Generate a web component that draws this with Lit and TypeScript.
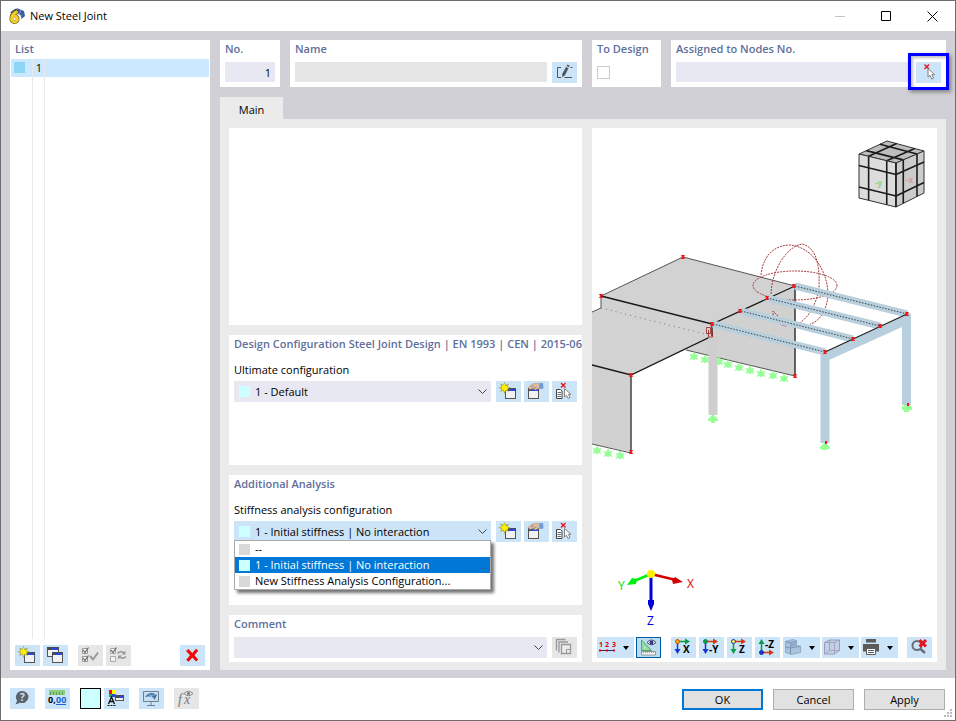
import { LitElement, html, svg, css, nothing, TemplateResult, SVGTemplateResult } from "lit";
import { customElement, state } from "lit/decorators.js";

/* ---------- icons, drawn on a 25 x 21 grid (one tool button) ---------- */

const windowShape = (x: number, y: number, w: number, h: number) => svg`
  <rect x=${x + 0.5} y=${y + 0.5} width=${w} height=${h} fill="#f1f1f1" stroke="#555"/>
  <rect x=${x} y=${y} width=${w + 1} height="3" fill="#4a4a55"/>
  <rect x=${x + 4} y=${y + 1} width=${w - 4} height="2" fill="#2b48e0"/>`;

const star = svg`
  <path d="M8.500 1l1.300 3.100 3.200-1.600-1.400 3.100 3.300 1.100-3.300 1.200 1.200 3.200-3-1.500-1.300 3.300-1.200-3.300-3.200 1.400 1.500-3.100-3.300-1.200 3.300-1.200-1.400-3.100 3.100 1.500z" fill="#9a9a4c"/>
  <path d="M8.500 2l1.200 3.200 2.300-.9-.9 2 2.300.500-2.300.9.800 2.100-2.200-1-1 2.600-1-2.600-2.200.9 1-2.100-2.700-.9 2.700-.9-1-2.100 2.100.9z" fill="#fff200"/>`;

const cursor = svg`
  <path d="M12.500 7.500v8.500l2-1.800 1.600 3.300 1.900-.9-1.600-3.200h2.600z" fill="#fff" stroke="#777" stroke-width=".9"/>`;

const redCross = (x: number, y: number, s: number, w = 1.4) => svg`
  <path d="M${x} ${y}l${s} ${s}m0 ${-s}l${-s} ${s}" stroke="#e8141c" stroke-width=${w} fill="none"/>`;

const axisArrow = (
  x1: number, y1: number, x2: number, y2: number, color: string,
) => {
  const dx = Math.sign(x2 - x1);
  const dy = Math.sign(y2 - y1);
  const head = dx
    ? `${x2 + 3},${y2} ${x2 - 2},${y2 - 3} ${x2 - 2},${y2 + 3}`
    : `${x2},${y2 + 3 * dy} ${x2 - 3},${y2 - 2 * dy} ${x2 + 3},${y2 - 2 * dy}`;
  return svg`<path d="M${x1} ${y1}L${x2} ${y2}" stroke=${color} stroke-width="1.500"/>
    <polygon points=${head} fill=${color}/>`;
};

const axisIcon = (
  label: string, right: string, vert: string, dot: string, ring: string, up = false,
) => {
  const oy = up ? 15.5 : 4.5;
  return svg`
    ${axisArrow(6.5, oy, 16, oy, right)}
    ${axisArrow(6.5, oy, 6.5, up ? 5 : 14, vert)}
    <circle cx="6.500" cy=${oy} r="2" fill=${dot} stroke=${ring}/>
    <text x=${label.length > 1 ? 10 : 12} y=${up ? 11 : 16} class="glyph">${label}</text>`;
};

const icons: Record<string, SVGTemplateResult> = {
  create: svg`${windowShape(9, 7, 10, 10)}${star}`,
  copy: svg`${windowShape(4, 2, 11, 9)}${windowShape(9, 7, 10, 10)}`,
  edit: svg`${windowShape(4, 7, 10, 10)}
    <path d="M4 6.500l4-3.500 6-.8 4 .8v4l-4 .8-3 1.200-2-1.500-3 1z" fill="#dcbca4" stroke="#a98d78" stroke-width=".5"/>
    <path d="M7 6l3-1.500M9.500 7.500l3-1.500" stroke="#8d6f5c" stroke-width=".7"/>
    <path d="M15 2.500l4-.5.500 5.500-4 .5z" fill="#6f9bd6"/>`,
  pickList: svg`${redCross(9, 2, 4.5)}${cursor}
    <path d="M4.500 8.500h4l1.500 1.500v7.500h-5.500z" fill="#fff" stroke="#444"/>
    <path d="M5.500 11.500h3.500M5.500 13.500h3.500M5.500 15.500h3.500" stroke="#444" stroke-width=".8"/>`,
  pickNode: svg`${redCross(8.5, 2.5, 4.5)}
    <path d="M12 6.500v8.500l2-1.800 1.700 3.800 1.900-.9-1.700-3.500h2.600z" fill="#fff" stroke="#777" stroke-width=".9"/>`,
  rename: svg`
    <path d="M9 5.500h-3.500v10h3.500M12.500 15.500h7.500M18.500 5.500h2" fill="none" stroke="#555"/>
    <path d="M14 5l2.500 1.300-3.500 7-3 2 .3-3.500z" fill="#555"/>
    <path d="M14.500 4l1-1.500 2.200 1.200-.8 1.500z" fill="#555"/>`,
  checkAll: svg`
    <path d="M4.500 3.500h5v5h-5zM4.500 11.500h5v5h-5z" fill="#f5f5f5" stroke="#999"/>
    <path d="M5 5l2 2.500 3.500-5M5 13l2 2.500 3.500-5" fill="none" stroke="#666" stroke-width="1.200"/>
    <path d="M12 11l3 3.500 5-7" fill="none" stroke="#999" stroke-width="2"/>`,
  toggle: svg`
    <path d="M4.500 3.500h5v5h-5zM4.500 11.500h5v5h-5z" fill="#f2f2f2" stroke="#aaa"/>
    <path d="M5 5l2 2.500 3.500-5" fill="none" stroke="#666" stroke-width="1.200"/>
    <path d="M11.500 8.500q3-3.500 6.500-.5M20 11.500q-3 3-6.500.5" fill="none" stroke="#999" stroke-width="1.500"/>
    <path d="M19.500 5.500v4h-4zM12 14.500v-4h4z" fill="#999"/>`,
  remove: svg`
    <path d="M6 6l2.500-2 3.800 4 3.700-4.200 2.300 2-3.800 4.500 3.700 4.200-2.200 2-3.700-4-3.600 4.200-2.500-2 3.800-4.500z" fill="#f00a0a"/>`,
  help: svg`
    <path d="M12.500 3a6.300 6 0 1 1-2.300 11.700L5.500 16.500l1.600-4A6.300 6 0 0 1 12.500 3z" fill="#5c6470"/>
    <text x="10" y="13" class="glyph" fill="#d5e6f5">?</text>`,
  units: svg`
    <path d="M4 2h16v5h-16z" fill="#8fce7e"/>
    <path d="M5.500 4v3M8.500 4v3M11.500 4v3M14.500 4v3M17.500 4v3" stroke="#4e9a45" stroke-width=".8"/>
    <text x="3" y="15" class="digits">0,</text><text x="11" y="15" class="digits" fill="#1a62d8">00</text>
    <path d="M11 16.500h10" stroke="#1a62d8"/>`,
  palette: svg`
    <path d="M5 2h3v4h-3z" fill="#e11"/><path d="M8 2h3.500v4h-3.500z" fill="#ff0"/>
    <path d="M5 6h3v3h-3z" fill="#18b14b"/><path d="M8 6h3.500v3h-3.500z" fill="#2b48e0"/>
    <path d="M4.500 16l3-7 3 7M5.500 13.500h4" fill="none" stroke="#111" stroke-width="1.300"/>
    <path d="M3.500 17.500h2M6.500 17.500h2M9.500 17.500h2" stroke="#111"/>
    ${windowShape(11, 7, 8, 5)}`,
  display: svg`
    <path d="M4.500 3.500h15v10h-15z" fill="#c6e0f2" stroke="#6d7f92"/>
    <path d="M6 9q5-7 12-2l-2.500 5q-1-4-4-3.500-3 0-5.500.5z" fill="#3f6fa8"/>
    <path d="M8 8.500l9-2M10.500 6l4 5" stroke="#a9c6e2" stroke-width=".7"/>
    <path d="M12 13.500v3.500M8 17.500h8" stroke="#6d7f92"/>`,
  formula: svg`
    <text x="4" y="16" class="serif">f</text><text x="10" y="16" class="serif">x</text>
    <path d="M10 5.500q4.500-4.500 9 0-4.500 4.500-9 0z" fill="#e8e8e8" stroke="#888"/>
    <circle cx="14.500" cy="5.500" r="1.500" fill="#777"/>`,
  library: svg`
    <path d="M4.500 13.500v-11h9M7 15.500v-10.500h9" fill="none" stroke="#999" stroke-width="1.300"/>
    <path d="M9.500 7.500h9v9h-9z" fill="#ebebeb" stroke="#999" stroke-width="1.300"/>
    <path d="M14.500 16.500v-4h4" fill="none" stroke="#999"/>`,
  numbering: svg`
    <text x="2" y="10" class="tiny">1</text><text x="8" y="10" class="tiny">2</text><text x="15" y="10" class="tiny">3</text>
    <path d="M3 13.500h14" stroke="#2a2a70"/>
    <path d="M2 12.500h2v2h-2zM9 12.500h2v2h-2zM16 12.500h2v2h-2z" fill="#e00"/>`,
  measure: svg`
    <path d="M5.500 3v10.500h10z" fill="#8fdc9c" stroke="#55a868"/>
    <path d="M8 9v2.500h2.500z" fill="#cce4f7"/>
    <path d="M5.500 14.500h14v3.500h-14z" fill="#f4f4f4" stroke="#888" stroke-width=".8"/>
    <path d="M7.500 14v2M9.500 14v2M11.500 14v2M13.500 14v2M15.500 14v2M17.500 14v2" stroke="#888" stroke-width=".7"/>
    <path d="M11 5.500q4.500-5 9 0-4.500 4.500-9 0z" fill="#fff" stroke="#3a3f78"/>
    <circle cx="15.500" cy="5.500" r="2" fill="#3a3f78"/>`,
  viewX: axisIcon("X", "#0a9a48", "#1436d0", "#ffb000", "#d04a00"),
  viewMinusY: axisIcon("-Y", "#d03a10", "#1436d0", "#0aa050", "#0a8a46"),
  viewZ: axisIcon("Z", "#d03a10", "#0a9a48", "#ffee33", "#223b9c"),
  viewMinusZ: axisIcon("-Z", "#d03a10", "#0a9a48", "#1436d0", "#1436b0", true),
  blocks: svg`
    <path d="M2.500 4.500l7-2 4 1v5l4 1v6l-9 2-6-2z" fill="#a9c2dd" stroke="#8299b5" stroke-width=".7"/>
    <path d="M2.500 4.500l5 1.200v11.800M7.500 5.700l6-1.700M7.500 11l10-1.800M7.500 11l-5-1" fill="none" stroke="#7489a6" stroke-width=".8"/>
    <path d="M7.500 5.700l6-1.700v4.500l-6 1.800z" fill="#8facce"/>`,
  wireCube: svg`
    <path d="M2.500 5.500l5-2.500h10v10.500l-5 3.500h-10z" fill="#c3cfe4" stroke="#9a9cba"/>
    <path d="M2.500 5.500h10v11.500M12.500 5.500l5-2.500M7.500 3v10.500h10M7.500 13.500l-5 3.500" fill="none" stroke="#9a9cba" stroke-width=".8"/>`,
  printer: svg`
    <path d="M5 2h10v3.500h-10zM2 7h16v7.500h-16z" fill="#5b5b5b"/>
    <path d="M5.500 11.500h9v6h-9z" fill="#fff" stroke="#5b5b5b"/>
    <path d="M7 13.500h6M7 15.500h6" stroke="#5b5b5b"/>`,
  resetZoom: svg`
    <circle cx="10" cy="8.500" r="4.500" fill="none" stroke="#6b6f78" stroke-width="2"/>
    <path d="M13.500 12l4.500 4" stroke="#6b6f78" stroke-width="2.500"/>
    ${redCross(12.5, 3, 6.5, 3)}`,
};

const icon = (name: string) =>
  html`<svg class="icon" viewBox="0 0 25 21" aria-hidden="true">${icons[name]}</svg>`;

/* ---------- model preview ---------- */

type Point = [number, number];

const nodes: Point[] = [
  [601, 296], [683, 257], [794, 286], [767, 298], [740, 311], [712, 324],
  [631, 375], [631, 452], [795, 376], [825, 352], [853, 339], [880, 326], [907, 314],
];
const lineSupports: Point[] = [
  [694, 356], [705, 359], [719, 361], [728, 364], [739, 367], [750, 370],
  [761, 373], [773, 375], [784, 378], [597, 450], [608, 453], [620, 455],
];
const beams: [Point, Point][] = [
  [[795, 286], [907, 314]],
  [[767, 298], [880, 326]],
  [[741, 311], [853, 339]],
  [[713, 324], [825, 352]],
];

const lerp = (a: Point, b: Point, t: number): Point => [
  a[0] + (b[0] - a[0]) * t,
  a[1] + (b[1] - a[1]) * t,
];

/* One cube face with its inner grid lines at a quarter and three quarters. */
const cubeFace = (a: Point, b: Point, c: Point, d: Point, fill: string) => {
  const lines = [0.26, 0.75].map((t) => {
    const [p, q] = [lerp(a, b, t), lerp(d, c, t)];
    const [r, s] = [lerp(a, d, t), lerp(b, c, t)];
    return `M${p}L${q}M${r}L${s}`;
  });
  return svg`
    <polygon points=${[a, b, c, d].join(" ")} fill=${fill} stroke="#333"/>
    <path d=${lines.join("")} stroke="#1c1c1c" stroke-width="1.600"/>`;
};

const cube = svg`
  ${cubeFace([859, 154], [887, 141], [924, 151], [896, 163], "#bdbdbd")}
  ${cubeFace([859, 154], [896, 163], [896, 207], [859, 198], "#dcdcdc")}
  ${cubeFace([896, 163], [924, 151], [924, 193], [896, 207], "#cccccc")}
  <path d="M896 163V207" stroke="#1c1c1c" stroke-width="1.600"/>
  <text x="875" y="186" class="cubeText" fill="#7ed88a">-y</text>
  <text x="906" y="183" class="cubeText" fill="#d99a9a">-x</text>`;

const scene = svg`
  <g stroke-linecap="butt">
    <polygon points="795,286 795,376 686,350 712,336 712,324" fill="#d1d1d1"/>
    <path d="M686 350L795 376" stroke="#555"/>
    <path d="M795 286V376" stroke="#333" stroke-width="1.500"/>
    <g fill="#98ff98">${lineSupports.map(([x, y]) => svg`
      <path d=${`M${x} ${y - 5}l1.500 3.500 3-.5-1.500 3 1.500 3-3-1-1.500 1.500-1.500-1.500-3 1 1.500-3-1.500-3 3 .5z`}/>`)}
      <path d="M713 414l5 5v2h-3v2h-4v-2h-3v-2zM825 442l5 5v2h-3v1h-5v-1h-2v-2zM907 403l5 4v3h-3v2h-5v-2h-2v-3z"/>
    </g>
    <polygon points="592,312 601,308 601,296 683,257 795,286 712,324 712,336 631,375 592,365" fill="#d2d2d2"/>
    <polygon points="592,365 631,375 631,452 592,444" fill="#d1d1d1"/>
    <path d="M601 296L683 257L795 286M592 312L601 308V296M592 444L631 453" fill="none" stroke="#555"/>
    <path d="M601 296L712 324L795 286M712 324V336L631 375L592 365" fill="none" stroke="#181818" stroke-width="1.300"/>
    <path d="M631 375V453" stroke="#444" stroke-width="1.500"/>
    <path d="M601 308L709 335" stroke="#777" stroke-dasharray="1 4"/>
    <path d="M713 336V415" stroke="#cecece" stroke-width="9"/>
    <path d="M706.500 327.500h4v6h-4zM708.500 330v7h4v-5" fill="none" stroke="#a02020" stroke-width=".8"/>
    <g fill="none" stroke="#a33a3a" stroke-width="1" stroke-dasharray="2 1">
      <ellipse cx="795" cy="285.500" rx="42" ry="14.500"/>
      <path d="M761 275C763 255 775 245 790 245C812 247 827 270 828 293C828 308 820 322 810 324"/>
      <path d="M771 294C772 268 788 246 802 244C815 247 820 262 819 287C817 305 806 322 795 325"/>
      <path d="M778 316L773 311C772 318 780 326 787 326"/>
    </g>
    <g stroke="#b8cfdd">
      <path d="M825 352V443M906.500 314V405" stroke-width="9"/>
      ${beams.map(([a, b]) => svg`<path d=${`M${a}L${b}`} stroke-width="7"/>`)}
    </g>
    <polygon points="825,352 907,314 911,313 911,323 829,360" fill="#b8cfdd"/>
    ${beams.map(([a, b]) => svg`
      <path d=${`M${a}L${b}`} stroke="#333" stroke-width=".9" stroke-dasharray="1.500 1.500"/>`)}
    <path d="M825 352L907 314" stroke="#222" stroke-width="1.200"/>
    <g fill="#f01818">${nodes.map(([x, y]) => svg`
      <path d=${`M${x - 2} ${y - 2}h4l-1 2 1 2h-4l1-2z`}/>`)}
      <path d="M825 441h2v3h-2zM907 403h2v3h-2z"/>
    </g>
  </g>
  <g>
    <path d="M651 574L676 580" stroke="#d40000" stroke-width="2.500"/>
    <polygon points="683,582 673,584 672,580 675,577" fill="#d40000"/>
    <path d="M651 574L634 581" stroke="#00f010" stroke-width="2.500"/>
    <polygon points="627,585 632,578 637,579 636,584" fill="#00f010"/>
    <path d="M651 574V603" stroke="#0000d8" stroke-width="3"/>
    <polygon points="648,600 654,600 654,604 651,611 648,604" fill="#0000d8"/>
    <circle cx="651" cy="574" r="4" fill="#fff000"/>
    <text x="687" y="588" class="axis" fill="#e00000">X</text>
    <text x="618" y="590" class="axis" fill="#00e010">Y</text>
    <text x="647" y="625" class="axis" fill="#0000e0">Z</text>
  </g>`;

const chevron = html`<svg class="chevron" viewBox="0 0 9 5" aria-hidden="true">
  <path d="M.5.500l4 4 4-4" fill="none" stroke="#444"/></svg>`;

interface Tool {
  icon: string;
  label: string;
  kind?: string;
  disabled?: boolean;
}

const listTools: Tool[] = [
  { icon: "create", label: "New" },
  { icon: "copy", label: "Copy" },
  { icon: "checkAll", label: "Select all", kind: "spaced", disabled: true },
  { icon: "toggle", label: "Invert selection", disabled: true },
  { icon: "remove", label: "Delete", kind: "last" },
];
const viewTools: Tool[] = [
  { icon: "numbering", label: "Numbering", kind: "menu" },
  { icon: "measure", label: "Show dimensions", kind: "pressed" },
  { icon: "viewX", label: "View in X", kind: "spaced" },
  { icon: "viewMinusY", label: "View in -Y" },
  { icon: "viewZ", label: "View in Z" },
  { icon: "viewMinusZ", label: "View in -Z" },
  { icon: "blocks", label: "Rendering", kind: "menu" },
  { icon: "wireCube", label: "Box view", kind: "menu" },
  { icon: "printer", label: "Print", kind: "menu" },
  { icon: "resetZoom", label: "Reset zoom", kind: "last" },
];
const configTools: Tool[] = [
  { icon: "create", label: "New configuration" },
  { icon: "edit", label: "Edit configuration" },
  { icon: "pickList", label: "Pick configuration" },
];

@customElement("app-root")
export class AppRoot extends LitElement {
  @state() private stiffness = 1;

  private stiffnessOptions = [
    "--",
    "1 - Initial stiffness | No interaction",
    "New Stiffness Analysis Configuration...",
  ];

  static styles = css`
    :host {
      display: flex;
      flex-direction: column;
      box-sizing: border-box;
      min-height: 100vh;
      border: 1px solid #6d6d70;
      background: #fff;
      color: #000;
      font: 11px/18px "Open Sans", "Noto Sans", sans-serif;
    }
    *, *::before { box-sizing: border-box; }
    button, input, select { font: inherit; color: inherit; margin: 0; border: 0; border-radius: 0; padding: 0; }
    svg { display: block; }

    .titlebar { display: flex; align-items: center; height: 30px; padding-left: 8px; }
    .logo { width: 16px; height: 16px; margin-right: 5px; }
    .title { flex: 1; margin: 0; font-size: 11px; font-weight: 400; }
    .winbtn { width: 46px; height: 29px; background: none; display: grid; place-items: center; }
    .winbtn svg { width: 11px; height: 11px; }

    .body { flex: 1; display: flex; gap: 10px; padding: 9px 9px 8px; background: #d1d0d6; }
    .card { background: #fff; padding: 0 5px; }
    .heading { display: block; margin: 0; font-size: 11px; line-height: 18px; font-weight: 600; color: #5f6f9b; white-space: nowrap; }

    .list { flex: 0 0 200px; display: flex; flex-direction: column; }
    .table { flex: 1; margin: 1px -4px 0; border-collapse: collapse; display: flex; }
    .table tbody { flex: 1; display: flex; flex-direction: column; }
    .table tr { display: flex; height: 18px; }
    .table tr.selected { background: #cce8ff; }
    .table tr.filler { flex: 1; }
    .table td { padding: 0; border-right: 1px solid #e9e9e9; text-align: right; }
    .table td.color { width: 22px; padding: 3px; }
    .table td.number { width: 12px; padding-right: 2px; }
    .table td.name { flex: 1; border: 0; }
    .chip { display: block; width: 11px; height: 11px; background: #8ed5f5; }

    .tools { display: flex; gap: 3px; }
    .list .tools { padding: 6px 0 4px; }
    .tool { flex: none; display: flex; align-items: center; width: 25px; height: 21px; background: #cce4f7; }
    .tool:disabled { background: #e6e6e6; }
    .tool.spaced { margin-left: 7px; }
    .tool.last { margin-left: auto; }
    .tool.menu { width: 37px; margin-right: -1px; }
    .tool.pressed { outline: 1px solid #005a9e; outline-offset: -1px; background: #bcdcf4; }
    .icon { width: 25px; height: 21px; }
    .arrow { width: 0; margin-left: 1px; border: 3px solid transparent; border-top: 4px solid #000; border-bottom: 0; }
    .glyph { font: bold 10px "Open Sans", sans-serif; }
    .digits { font: bold 9px "Open Sans", sans-serif; }
    .tiny { font: bold 7px "Open Sans", sans-serif; fill: #e00000; }
    .serif { font: italic 14px "Liberation Serif", serif; fill: #777; }

    .main { flex: 1; min-width: 0; display: flex; flex-direction: column; }
    .top { display: grid; grid-template-columns: 362fr 354fr; gap: 10px; margin-bottom: 10px; }
    .pair { display: flex; gap: 10px; min-width: 0; }
    .top .card { min-height: 47px; }
    .top .heading { margin-bottom: 4px; }
    .no { flex: 0 0 60px; }
    .design { flex: 0 0 69px; }
    .grow { flex: 1; min-width: 0; }
    .field { display: block; flex: 1; width: 100%; min-width: 0; height: 20px; background: #e8e8f2; }
    .field:disabled { background: #e6e6e6; }
    .no .field { padding-right: 4px; text-align: right; }
    .row { display: flex; gap: 5px; }
    .check { appearance: none; display: block; width: 13px; height: 13px; margin-top: 8px; border: 1px solid #ccc; background: #fff; }
    .check:checked { background: #5f6f9b; }
    .marked { position: relative; }
    .marked::after {
      content: ""; position: absolute; inset: -9px -8px -7px; border: 3px solid #0000ff;
      box-shadow: 2px 2px 4px rgb(0 0 0 / 40%), inset 2px 2px 3px rgb(0 0 0 / 25%); pointer-events: none;
    }

    .tab { align-self: flex-start; width: 63px; height: 22px; background: #ebebeb; padding-top: 3px; }
    .page { flex: 1; display: grid; grid-template-columns: 353fr 345fr; gap: 10px; padding: 9px 9px 8px; background: #ebebeb; }
    .config { display: flex; flex-direction: column; gap: 10px; min-width: 0; }
    .block { min-height: 130px; }
    .blank { flex: 1; min-height: 130px; }
    .sub { display: block; margin: 8px 0 2px; }
    .comment { padding-bottom: 4px; }
    .comment .heading { margin-bottom: 4px; }

    .combo { position: relative; flex: 1; min-width: 0; display: grid; align-items: center; }
    .combo > * { grid-area: 1 / 1; }
    .select { appearance: none; width: 100%; height: 21px; padding: 0 16px 0 21px; background: #e8e8f2; outline: 0; }
    .open .select { background: #cce4f7; }
    .swatch { width: 11px; height: 11px; margin-left: 5px; background: #ccffff; pointer-events: none; }
    .swatch.none { background: #d9d9d9; }
    .chevron { width: 9px; height: 5px; margin-right: 4px; justify-self: end; pointer-events: none; }
    .popup {
      position: absolute; top: 19px; left: 0; right: 0; z-index: 2; margin: 0; padding: 0; list-style: none;
      border: 1px solid #aaa; background: #fff; box-shadow: 3px 3px 3px rgb(0 0 0 / 55%);
    }
    .option { display: flex; align-items: center; gap: 5px; height: 16px; padding-right: 3px; white-space: nowrap; }
    .option .swatch { margin-left: 4px; }
    .option.current { background: #0078d7; color: #fff; }
    .more { margin-left: auto; color: #36577c; }

    .view { display: flex; flex-direction: column; min-width: 0; background: #fff; padding-bottom: 4px; }
    .model { flex: 1; width: 100%; min-height: 0; }
    .view .tools { padding: 0 5px; }
    .axis { font: 12px "Open Sans", sans-serif; }
    .cubeText { font: bold 8px "Open Sans", sans-serif; }

    .footer { position: relative; display: flex; align-items: flex-start; gap: 10px; min-height: 42px; padding: 10px 10px 0 9px; }
    .footer .tools { gap: 10px; flex: 1; }
    .swatchbtn { width: 21px; height: 21px; border: 1px solid #000; background: #ccffff; }
    .footer .tool.near { margin-left: -7px; }
    .action { width: 81px; height: 21px; margin-top: 1px; line-height: 18px; border: 1px solid #adadad; background: #e1e1e1; }
    .action.primary { border: 2px solid #0078d7; line-height: 16px; }
    .grip { position: absolute; right: 3px; bottom: 2px; width: 9px; height: 9px; }
  `;

  private tool({ icon: name, label, kind = "", disabled = false }: Tool): TemplateResult {
    return html`<button class="tool ${kind}" aria-label=${label} ?disabled=${disabled}>
      ${icon(name)}${kind === "menu" ? html`<span class="arrow"></span>` : nothing}
    </button>`;
  }

  render() {
    return html`
      <header class="titlebar">
        <svg class="logo" viewBox="0 0 16 16" aria-hidden="true">
          <path d="M1 5Q5 0 9 0.500L15 3 16 8 12.500 11Q12 6 8 5z" fill="#3a5f9e"/>
          <path d="M4 3l9 5M8 1l-2 4M12 2l-2 5" stroke="#8ea8cc" stroke-width=".8"/>
          <path d="M8.500 3.200Q4 5 2.600 9.500" stroke="#5c4d10" stroke-width="4.500" fill="none"/>
          <circle cx="5.500" cy="11" r="3.200" fill="none" stroke="#5c4d10" stroke-width="3.600"/>
          <path d="M8.500 3.600Q4 5 2.600 9.500" stroke="#f4cf2c" stroke-width="3" fill="none"/>
          <circle cx="5.500" cy="11" r="3" fill="none" stroke="#f4cf2c" stroke-width="2.800"/>
        </svg>
        <h1 class="title">New Steel Joint</h1>
        <button class="winbtn" aria-label="Minimize" disabled>
          <svg viewBox="0 0 11 11"><path d="M0 5.500h10" stroke="#c4c4c4"/></svg>
        </button>
        <button class="winbtn" aria-label="Maximize">
          <svg viewBox="0 0 11 11"><path d="M.5.500h9v9h-9z" fill="none" stroke="#000"/></svg>
        </button>
        <button class="winbtn" aria-label="Close">
          <svg viewBox="0 0 11 11"><path d="M.5.500l10 10m0-10l-10 10" stroke="#000"/></svg>
        </button>
      </header>

      <main class="body">
        <section class="card list">
          <h2 class="heading">List</h2>
          <table class="table" aria-label="List">
            <tbody>
              <tr class="selected">
                <td class="color"><span class="chip"></span></td>
                <td class="number">1</td>
                <td class="name"></td>
              </tr>
              <tr class="filler" aria-hidden="true">
                <td class="color"></td><td class="number"></td><td class="name"></td>
              </tr>
            </tbody>
          </table>
          <div class="tools">${listTools.map((t) => this.tool(t))}</div>
        </section>

        <div class="main">
          <div class="top">
            <div class="pair">
              <div class="card no">
                <label class="heading" for="no">No.</label>
                <input id="no" class="field" value="1">
              </div>
              <div class="card grow">
                <label class="heading" for="name">Name</label>
                <div class="row">
                  <input id="name" class="field" disabled>
                  ${this.tool({ icon: "rename", label: "Edit name" })}
                </div>
              </div>
            </div>
            <div class="pair">
              <div class="card design">
                <label class="heading" for="design">To Design</label>
                <input id="design" class="check" type="checkbox">
              </div>
              <div class="card grow">
                <label class="heading" for="nodes">Assigned to Nodes No.</label>
                <div class="row">
                  <input id="nodes" class="field">
                  ${this.tool({ icon: "pickNode", label: "Select nodes", kind: "marked" })}
                </div>
              </div>
            </div>
          </div>

          <button class="tab">Main</button>
          <div class="page">
            <div class="config">
              <section class="card blank"></section>
              <section class="card block">
                <h2 class="heading">Design Configuration Steel Joint Design | EN 1993 | CEN | 2015-06</h2>
                <label class="sub" for="ultimate">Ultimate configuration</label>
                <div class="row">
                  <div class="combo">
                    <select id="ultimate" class="select"><option>1 - Default</option></select>
                    <span class="swatch"></span>${chevron}
                  </div>
                  <div class="tools">${configTools.map((t) => this.tool(t))}</div>
                </div>
              </section>
              <section class="card block">
                <h2 class="heading">Additional Analysis</h2>
                <label class="sub" for="stiffness">Stiffness analysis configuration</label>
                <div class="row">
                  <div class="combo open">
                    <select id="stiffness" class="select">
                      ${this.stiffnessOptions.map((o, i) => html`
                        <option ?selected=${i === this.stiffness}>${o}</option>`)}
                    </select>
                    <span class="swatch"></span>${chevron}
                    <ul class="popup" role="listbox" aria-label="Stiffness analysis configuration">
                      ${this.stiffnessOptions.map((o, i) => html`
                        <li class="option ${i === this.stiffness ? "current" : ""}" role="option"
                          aria-selected=${i === this.stiffness} @click=${() => (this.stiffness = i)}>
                          <span class="swatch ${i === 1 ? "" : "none"}"></span>${o}
                          ${i === this.stiffness ? html`<span class="more">...</span>` : nothing}
                        </li>`)}
                    </ul>
                  </div>
                  <div class="tools">${configTools.map((t) => this.tool(t))}</div>
                </div>
              </section>
              <section class="card comment">
                <label class="heading" for="comment">Comment</label>
                <div class="row">
                  <div class="combo">
                    <select id="comment" class="select"><option></option></select>
                    ${chevron}
                  </div>
                  ${this.tool({ icon: "library", label: "Comment library", disabled: true })}
                </div>
              </section>
            </div>

            <section class="view">
              <svg class="model" viewBox="592 128 345 509" role="img" aria-label="Model preview">
                ${scene}${cube}
              </svg>
              <div class="tools">${viewTools.map((t) => this.tool(t))}</div>
            </section>
          </div>
        </div>
      </main>

      <footer class="footer">
        <div class="tools">
          ${this.tool({ icon: "help", label: "Help" })}
          ${this.tool({ icon: "units", label: "Units and decimal places" })}
          <button class="swatchbtn" aria-label="Color"></button>
          ${this.tool({ icon: "palette", label: "Color settings", kind: "near" })}
          ${this.tool({ icon: "display", label: "Display" })}
          ${this.tool({ icon: "formula", label: "Formula", disabled: true })}
        </div>
        <button class="action primary">OK</button>
        <button class="action">Cancel</button>
        <button class="action">Apply</button>
        <svg class="grip" viewBox="0 0 9 9" aria-hidden="true">
          <path d="M7 0h2v2h-2zM4 3h2v2h-2zM7 3h2v2h-2zM1 6h2v2h-2zM4 6h2v2h-2zM7 6h2v2h-2z" fill="#bbb"/>
        </svg>
      </footer>
    `;
  }
}
